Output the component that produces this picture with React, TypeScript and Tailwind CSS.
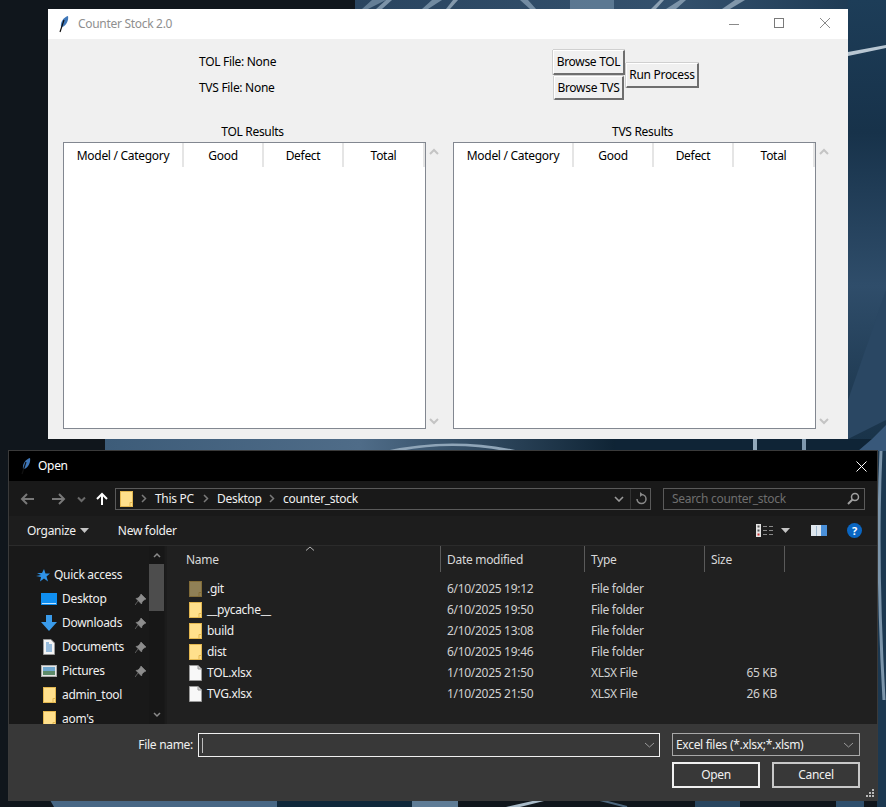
import { JSX } from 'react'

const font = '[font-family:"Noto_Sans",sans-serif] tracking-[-0.3px]'

// Wallpaper only shows in the strips around the two windows
const Wallpaper = (): JSX.Element => (
  <svg className="absolute inset-0" width="886" height="807" viewBox="0 0 886 807">
    <defs>
      <linearGradient id="wallTop" x1="0" y1="0" x2="1" y2="0">
        <stop offset="0" stopColor="#2a4560" />
        <stop offset="0.6" stopColor="#34516d" />
        <stop offset="1" stopColor="#1b3750" />
      </linearGradient>
      <linearGradient id="wallRight" x1="0" y1="0" x2="0" y2="1">
        <stop offset="0" stopColor="#1d3d58" />
        <stop offset="0.3" stopColor="#17324a" />
        <stop offset="0.65" stopColor="#2f4d6a" />
        <stop offset="1" stopColor="#193349" />
      </linearGradient>
      <linearGradient id="wallMid" x1="0" y1="0" x2="1" y2="0">
        <stop offset="0" stopColor="#3d5c79" />
        <stop offset="0.5" stopColor="#4f6c88" />
        <stop offset="1" stopColor="#0f2435" />
      </linearGradient>
    </defs>
    <rect width="886" height="807" fill="#10161c" />
    <rect x="355" y="0" width="531" height="12" fill="url(#wallTop)" />
    <g opacity="0.7">
      <polygon points="362,9 372,0 386,0 368,9" fill="#7d97ad" />
      <polygon points="376,9 386,0 392,0 382,9" fill="#9fb4c6" />
      <polygon points="422,9 432,0 442,0 428,9" fill="#8fa7bb" />
      <polygon points="446,9 453,0 458,0 450,9" fill="#a9bccb" />
      <polygon points="520,0 528,0 536,9 530,9" fill="#8fa7bb" />
      <rect x="570" y="0" width="44" height="9" fill="#6d8aa3" />
      <polygon points="651,9 660,0 664,0 656,9" fill="#b5c5d2" />
      <polygon points="666,9 680,0 686,0 676,9" fill="#9db2c4" />
      <polygon points="722,9 735,0 745,0 730,9" fill="#a5b8c8" />
    </g>
    <rect x="848" y="0" width="38" height="440" fill="url(#wallRight)" />
    <polygon points="848,52 886,45 886,48 848,56" fill="#b8c7d3" />
    <polygon points="848,400 886,290 886,420 848,439" fill="#2a4763" />

    <rect x="105" y="439" width="510" height="12" fill="url(#wallMid)" />
    <path d="M385 451 Q452 436 520 451 L505 451 Q452 441 400 451 Z" fill="#8fa5b8" />
    <rect x="615" y="439" width="271" height="12" fill="#0f2436" />
    <rect x="753" y="439" width="4" height="12" fill="#93a9bb" />
    <rect x="802" y="439" width="4" height="12" fill="#7f98ad" />
    <polygon points="858,451 872,439 886,425 886,451" fill="#38587a" />

    <rect x="877" y="451" width="9" height="356" fill="#1c3850" />
    <path d="M881 451 Q876 560 884 700" stroke="#7c95aa" strokeWidth="3" fill="none" />

    <polygon points="50,800 277,800 277,807 54,807" fill="#486785" />
    <rect x="277" y="800" width="135" height="7" fill="#10283b" />
    <rect x="412" y="800" width="46" height="7" fill="#5f7c96" />
    <path d="M506 807 L537 800 L548 800 L520 807 Z" fill="#a9bbc9" />
    <path d="M600 800 L627 807" stroke="#4d667d" strokeWidth="2" />
    <rect x="695" y="800" width="45" height="7" fill="#294660" />
    <rect x="836" y="800" width="28" height="7" fill="#2f4f6c" />
  </svg>
)

const Feather = ({ color }: { color: string }): JSX.Element => (
  <svg width="12" height="18" viewBox="0 0 12 18" className="shrink-0">
    <path d="M3 12 C2 7 6 2 10 1 C11 5 8 11 4 12 Z" fill={color} />
    <path d="M6 5 L2 17" stroke="#111" strokeWidth="1.2" />
  </svg>
)

const TkButton = ({ label, className }: { label: string; className: string }): JSX.Element => (
  <div
    className={`flex items-center justify-center bg-[#f0f0f0] border-t border-l border-t-white border-l-white border-b-2 border-r-2 border-b-[#6e6e6e] border-r-[#6e6e6e] shadow-[0_-1px_0_#d0d0d0,-1px_0_0_#d0d0d0] text-[12px] text-black ${className}`}
  >
    {label}
  </div>
)

const Chevron = ({ up }: { up?: boolean }): JSX.Element => (
  <svg width="10" height="8" viewBox="0 0 10 8">
    <path d={up ? 'M1 6 L5 2 L9 6' : 'M1 2 L5 6 L9 2'} stroke="#c4c4c4" strokeWidth="2" fill="none" />
  </svg>
)

const ResultTree = ({ title }: { title: string }): JSX.Element => (
  <div className="flex flex-col w-[379px]">
    <div className="h-[18px] mb-[1px] leading-[18px] text-center text-[12px] text-black">{title}</div>
    <div className="flex">
      <div className="w-[363px] h-[287px] bg-white border border-[#828790]">
        <div className="flex h-[24px] text-[12px] text-black leading-[25px] text-center">
          <div className="w-[120px] border-r-2 border-[#e5e5e5]">Model / Category</div>
          <div className="w-[80px] border-r-2 border-[#e5e5e5]">Good</div>
          <div className="w-[80px] border-r-2 border-[#e5e5e5]">Defect</div>
          <div className="w-[81px] border-r-2 border-[#e5e5e5]">Total</div>
        </div>
      </div>
      <div className="w-[16px] h-[287px] flex flex-col justify-between items-center pt-[6px] pb-[4px]">
        <Chevron up />
        <Chevron />
      </div>
    </div>
  </div>
)

const CounterStockWindow = (): JSX.Element => (
  <div className={`absolute left-[48px] top-[9px] w-[800px] h-[430px] flex flex-col bg-[#f0f0f0] ${font}`}>
    <div className="h-[30px] shrink-0 bg-white flex items-center">
      <div className="ml-[10px] mr-[8px] flex">
        <Feather color="#3f77b8" />
      </div>
      <span className="text-[12px] text-[#8f8f8f]">Counter Stock 2.0</span>
      <svg width="130" height="30" viewBox="0 0 130 30" className="ml-auto">
        <path d="M11 15.5 H21" stroke="#8a8a8a" />
        <rect x="56.5" y="9.5" width="9" height="9" fill="none" stroke="#7a7a7a" />
        <path d="M102 9 L112 19 M112 9 L102 19" stroke="#8a8a8a" />
      </svg>
    </div>
    <div className="flex h-[62px] pt-[11px] pl-[151px]">
      <div className="w-[354px] -mt-[1px] flex flex-col text-[12px] text-black">
        <div className="h-[26px] leading-[26px]">TOL File: None</div>
        <div className="h-[26px] leading-[26px]">TVS File: None</div>
      </div>
      <div className="flex flex-col items-center w-[72px]">
        <TkButton label="Browse TOL" className="w-[72px] h-[25px]" />
        <TkButton label="Browse TVS" className="w-[70px] h-[24px] mt-[1px]" />
      </div>
      <TkButton label="Run Process" className="w-[73px] h-[25px] mt-[13px] ml-[1px]" />
    </div>
    <div className="flex gap-[11px] pl-[15px] pt-[22px]">
      <ResultTree title="TOL Results" />
      <ResultTree title="TVS Results" />
    </div>
  </div>
)

const FolderIcon = ({ dim }: { dim?: boolean }): JSX.Element => (
  <svg width="13" height="16" viewBox="0 0 13 16" className={dim ? 'opacity-50 shrink-0' : 'shrink-0'}>
    <rect x="0.5" y="0.5" width="12" height="15" fill="#ffe08c" stroke="#e3b750" />
    <path d="M10 15.5 V11.5 H12.5" fill="none" stroke="#e3b750" />
  </svg>
)

const FileIcon = (): JSX.Element => (
  <svg width="13" height="16" viewBox="0 0 13 16" className="shrink-0">
    <path d="M0.5 0.5 H9 L12.5 4 V15.5 H0.5 Z" fill="#f8f8f8" stroke="#9a9a9a" />
    <path d="M9 0.5 V4 H12.5" fill="#d0d0d0" stroke="#9a9a9a" />
  </svg>
)

const Pin = (): JSX.Element => (
  <svg width="11" height="11" viewBox="0 0 11 11" className="absolute left-[126px]">
    <path d="M6 0 L11 5 L9 6 L7 8 L6.5 10 L1 4.5 L3 4 L5 2 Z M3 7 L0 11" fill="#8d8d8d" stroke="#8d8d8d" strokeWidth="0.6" />
  </svg>
)

const navItems: { label: string; icon: JSX.Element; pin?: boolean }[] = [
  {
    label: 'Desktop',
    pin: true,
    icon: (
      <svg width="16" height="12" viewBox="0 0 16 12">
        <rect width="16" height="12" fill="#0f8ef0" />
        <rect x="1" y="10" width="14" height="1" fill="#bfe3ff" />
      </svg>
    )
  },
  {
    label: 'Downloads',
    pin: true,
    icon: (
      <svg width="16" height="16" viewBox="0 0 16 16">
        <path d="M5 0 H11 V7 H16 L8 16 L0 7 H5 Z" fill="#3a9bea" />
      </svg>
    )
  },
  {
    label: 'Documents',
    pin: true,
    icon: (
      <svg width="16" height="16" viewBox="0 0 16 16">
        <path d="M2.5 0.5 H10 L13.5 4 V15.5 H2.5 Z" fill="#f4f4f4" stroke="#999" />
        <path d="M5 6 H11 M5 8 H11 M5 10 H11 M5 12 H11 M5 4 H8" stroke="#3b83c4" />
      </svg>
    )
  },
  {
    label: 'Pictures',
    pin: true,
    icon: (
      <svg width="16" height="12" viewBox="0 0 16 12">
        <rect x="0.5" y="0.5" width="15" height="11" fill="#e6e6e6" stroke="#aaa" />
        <rect x="2" y="2" width="12" height="4" fill="#6fa7cf" />
        <rect x="2" y="6" width="12" height="4" fill="#5d8a6a" />
      </svg>
    )
  },
  { label: 'admin_tool', icon: <FolderIcon /> },
  { label: "aom's", icon: <FolderIcon /> }
]

const files = [
  { name: '.git', date: '6/10/2025 19:12', type: 'File folder', size: '', folder: true, dim: true },
  { name: '__pycache__', date: '6/10/2025 19:50', type: 'File folder', size: '', folder: true },
  { name: 'build', date: '2/10/2025 13:08', type: 'File folder', size: '', folder: true },
  { name: 'dist', date: '6/10/2025 19:46', type: 'File folder', size: '', folder: true },
  { name: 'TOL.xlsx', date: '1/10/2025 21:50', type: 'XLSX File', size: '65 KB' },
  { name: 'TVG.xlsx', date: '1/10/2025 21:50', type: 'XLSX File', size: '26 KB' }
]

const NavPane = (): JSX.Element => (
  <div className="relative w-[158px] h-[178px] shrink-0 bg-[#191919] border-r-2 border-[#1c1c1c] overflow-hidden text-[12px] text-[#f0f0f0]">
    <div className="flex flex-col pt-[17px]">
      <div className="flex items-center h-[24px] pl-[27px] gap-[4px]">
        <svg width="14" height="13" viewBox="0 0 14 13">
          <path d="M8 0 L9.5 4.5 L14 4.5 L10.5 7.5 L12 12.5 L8 9.5 L4 12.5 L5 8 L0 7 L5 6 L1 4 L6 4 Z" fill="#2f93e8" />
        </svg>
        Quick access
      </div>
      {navItems.map((item) => (
        <div key={item.label} className="relative flex items-center h-[24px] pl-[32px]">
          <div className="w-[16px] flex justify-center mr-[5px]">{item.icon}</div>
          {item.label}
          {item.pin && <Pin />}
        </div>
      ))}
    </div>
    <div className="absolute right-[1px] top-0 bottom-0 w-[15px] flex flex-col items-center bg-[#171717]">
      <svg width="8" height="6" viewBox="0 0 8 6" className="mt-[6px]">
        <path d="M1 5 L4 2 L7 5" stroke="#8a8a8a" strokeWidth="1.5" fill="none" />
      </svg>
      <div className="w-[15px] h-[47px] mt-[6px] bg-[#4d4d4d]" />
      <svg width="8" height="6" viewBox="0 0 8 6" className="mt-auto mb-[6px]">
        <path d="M1 1 L4 4 L7 1" stroke="#8a8a8a" strokeWidth="1.5" fill="none" />
      </svg>
    </div>
  </div>
)

const FileList = (): JSX.Element => (
  <div className="relative flex-1 bg-[#202020] text-[12px] text-[#f0f0f0]">
    <svg width="10" height="5" viewBox="0 0 10 5" className="absolute left-[138px] top-[0px]">
      <path d="M1 4.5 L5 1 L9 4.5" stroke="#b0b0b0" fill="none" />
    </svg>
    <div className="flex h-[26px] text-[#d8d8d8] leading-[27px]">
      <div className="w-[274px] pl-[19px] border-r border-[#5a5a5a]">Name</div>
      <div className="w-[144px] pl-[6px] border-r border-[#5a5a5a]">Date modified</div>
      <div className="w-[120px] pl-[6px] border-r border-[#5a5a5a]">Type</div>
      <div className="w-[80px] pl-[6px] border-r border-[#5a5a5a]">Size</div>
    </div>
    <div className="flex flex-col pt-[6px]">
      {files.map((file) => (
        <div key={file.name} className="flex items-center h-[21px]">
          <div className="w-[274px] flex items-center pl-[22px] gap-[5px]">
            {file.folder ? <FolderIcon dim={file.dim} /> : <FileIcon />}
            <span>{file.name}</span>
          </div>
          <div className="w-[144px] pl-[6px] text-[#d0d0d0]">{file.date}</div>
          <div className="w-[120px] pl-[6px] text-[#d0d0d0]">{file.type}</div>
          <div className="w-[72px] text-right text-[#d0d0d0]">{file.size}</div>
        </div>
      ))}
    </div>
  </div>
)

const CrumbSep = (): JSX.Element => (
  <div className="w-[22px] flex justify-center">
    <svg width="6" height="9" viewBox="0 0 6 9">
      <path d="M1 1 L4.5 4.5 L1 8" stroke="#7a7a7a" strokeWidth="1.5" fill="none" />
    </svg>
  </div>
)

const Toolbar = (): JSX.Element => (
  <div className="h-[35px] shrink-0 bg-[#191919] flex items-center text-[12px]">
    <svg width="96" height="20" viewBox="0 0 96 20" className="ml-[10px] shrink-0">
      <path d="M15 10 H3 M8 5 L3 10 L8 15" stroke="#787878" strokeWidth="2" fill="none" />
      <path d="M33 10 H45 M40 5 L45 10 L40 15" stroke="#787878" strokeWidth="2" fill="none" />
      <path d="M59 8.5 L62.5 12 L66 8.5" stroke="#6a6a6a" strokeWidth="2" fill="none" />
      <path d="M83 16 V5 M78 10 L83 5 L88 10" stroke="#ffffff" strokeWidth="2" fill="none" />
    </svg>
    <div className="flex items-center w-[536px] h-[22px] border border-[#5a5a5a] bg-[#191919] text-[#f0f0f0]">
      <div className="ml-[4px]">
        <FolderIcon />
      </div>
      <CrumbSep />
      <span className="w-[40px]">This PC</span>
      <CrumbSep />
      <span className="w-[44px]">Desktop</span>
      <CrumbSep />
      <span>counter_stock</span>
      <svg width="10" height="6" viewBox="0 0 10 6" className="ml-auto mr-[6px]">
        <path d="M1 1 L5 5 L9 1" stroke="#9a9a9a" strokeWidth="1.6" fill="none" />
      </svg>
      <div className="h-full w-[20px] border-l border-[#333] flex items-center justify-center">
        <svg width="12" height="13" viewBox="0 0 12 13">
          <path d="M6.5 2.5 A4.5 4.5 0 1 1 2 7" stroke="#8a8a8a" strokeWidth="1.5" fill="none" />
          <path d="M5 0 L8 2.5 L5 5 Z" fill="#8a8a8a" />
        </svg>
      </div>
    </div>
    <div className="flex items-center w-[202px] h-[22px] ml-[12px] pl-[8px] border border-[#5a5a5a] text-[#6e6e6e]">
      Search counter_stock
      <svg width="13" height="13" viewBox="0 0 13 13" className="ml-auto mr-[4px]">
        <circle cx="8" cy="5" r="3.5" stroke="#a0a0a0" strokeWidth="1.5" fill="none" />
        <path d="M5.5 7.5 L1 12" stroke="#a0a0a0" strokeWidth="2" />
      </svg>
    </div>
  </div>
)

const CommandBar = (): JSX.Element => (
  <div className="h-[30px] shrink-0 bg-[#1d1d1d] border-b border-[#2b2b2b] flex items-center text-[12px] text-[#f0f0f0]">
    <span className="ml-[18px]">Organize</span>
    <svg width="9" height="5" viewBox="0 0 9 5" className="ml-[4px]">
      <path d="M0 0 H9 L4.5 5 Z" fill="#c4c4c4" />
    </svg>
    <span className="ml-[29px]">New folder</span>
    <div className="ml-auto flex items-center mr-[15px]">
      <svg width="17" height="13" viewBox="0 0 17 13">
        <rect width="5" height="13" fill="#e4e4e4" />
        <rect x="1.5" y="1.5" width="2" height="2" fill="#555" />
        <rect x="1.5" y="5.5" width="2" height="2" fill="#555" />
        <rect x="1.5" y="9.5" width="2" height="2" fill="#c33" />
        <path d="M7 2.5 H11 M13 2.5 H17 M7 6.5 H11 M13 6.5 H17 M7 10.5 H11 M13 10.5 H17" stroke="#8a8a8a" />
      </svg>
      <svg width="9" height="5" viewBox="0 0 9 5" className="ml-[8px]">
        <path d="M0 0 H9 L4.5 5 Z" fill="#c4c4c4" />
      </svg>
      <svg width="16" height="11" viewBox="0 0 16 11" className="ml-[21px]">
        <rect width="16" height="11" fill="#dfe7ee" />
        <rect x="10" y="0" width="6" height="11" fill="#4a90d9" />
        <rect x="5" y="1" width="1" height="10" fill="#9db8d0" />
      </svg>
      <div className="ml-[20px] w-[15px] h-[15px] rounded-full bg-[#0a66c2] text-white text-[11px] font-bold leading-[15px] text-center">
        ?
      </div>
    </div>
  </div>
)

const Footer = (): JSX.Element => (
  <div className="relative flex-1 bg-[#383838] text-[12px] text-[#f0f0f0] pt-[9px] pr-[17px]">
    <div className="flex items-start">
      <span className="w-[184px] text-right leading-[24px]">File name:</span>
      <div className="ml-[5px] w-[462px] h-[24px] border border-[#f0f0f0] flex items-center justify-between pl-[3px] pr-[4px]">
        <div className="w-px h-[15px] bg-[#bdbdbd]" />
        <svg width="11" height="6" viewBox="0 0 11 6">
          <path d="M1 1 L5.5 5 L10 1" stroke="#9a9a9a" fill="none" />
        </svg>
      </div>
      <div className="ml-[12px] w-[188px] h-[23px] border border-[#a8a8a8] flex items-center justify-between pl-[3px] pr-[5px]">
        Excel files (*.xlsx;*.xlsm)
        <svg width="11" height="6" viewBox="0 0 11 6">
          <path d="M1 1 L5.5 5 L10 1" stroke="#9a9a9a" fill="none" />
        </svg>
      </div>
    </div>
    <div className="flex justify-end gap-[12px] mt-[5px]">
      <div className="w-[88px] h-[26px] border-2 border-[#f0f0f0] text-center leading-[22px]">Open</div>
      <div className="w-[88px] h-[26px] border-2 border-[#c8c8c8] text-center leading-[22px]">Cancel</div>
    </div>
    <svg width="10" height="10" viewBox="0 0 10 10" className="absolute right-[2px] bottom-[2px]">
      <path d="M7 1h2v2H7z M4 4h2v2H4z M7 4h2v2H7z M1 7h2v2H1z M4 7h2v2H4z M7 7h2v2H7z" fill="#b8b8b8" />
    </svg>
  </div>
)

const OpenDialog = (): JSX.Element => (
  <div className={`absolute left-[8px] top-[450px] w-[870px] h-[351px] flex flex-col border border-[#3a3a3a] ${font}`}>
    <div className="h-[30px] shrink-0 bg-black flex items-center text-[12px] text-white">
      <div className="ml-[11px] mr-[6px] flex">
        <Feather color="#3f77b8" />
      </div>
      Open
      <svg width="11" height="11" viewBox="0 0 11 11" className="ml-auto mr-[10px]">
        <path d="M0.5 0.5 L10.5 10.5 M10.5 0.5 L0.5 10.5" stroke="#fff" />
      </svg>
    </div>
    <Toolbar />
    <CommandBar />
    <div className="flex h-[178px] shrink-0">
      <NavPane />
      <FileList />
    </div>
    <Footer />
  </div>
)

export default function App(): JSX.Element {
  return (
    <div className="relative w-[886px] h-[807px] overflow-hidden bg-[#10161c]">
      <Wallpaper />
      <CounterStockWindow />
      <OpenDialog />
    </div>
  )
}
